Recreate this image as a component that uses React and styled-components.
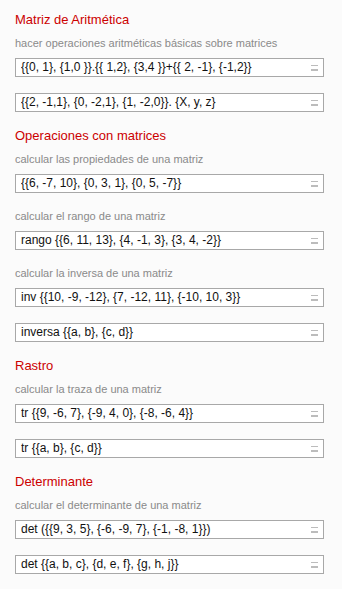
import React from "react";
import styled, { createGlobalStyle } from "styled-components";

const GlobalStyle = createGlobalStyle`
  html, body {
    margin: 0;
    padding: 0;
    background: #fbfbfb;
  }
  body {
    font-family: "Liberation Sans", Arial, sans-serif;
  }
`;

const Page = styled.div`
  width: 342px;
  padding: 12px 18px 20px 15px;
  box-sizing: border-box;
  display: flex;
  flex-direction: column;
  gap: 16px;
`;

const Section = styled.section`
  display: flex;
  flex-direction: column;
  gap: 16px;
`;

const Title = styled.h2`
  margin: 0 0 -8px;
  font-size: 13px;
  line-height: 16px;
  font-weight: normal;
  color: #cc0000;
`;

const Example = styled.div`
  display: flex;
  flex-direction: column;
  gap: 8px;
`;

const Caption = styled.div`
  font-size: 11px;
  line-height: 14px;
  color: #8a8a8a;
`;

const Field = styled.div`
  height: 19px;
  box-sizing: border-box;
  border: 1px solid #a8a8a8;
  background: #ffffff;
  display: flex;
  align-items: center;
  padding: 0 5px 0 5px;
`;

const Query = styled.span`
  flex: 1;
  font-size: 12px;
  line-height: 17px;
  color: #111;
  white-space: nowrap;
  overflow: hidden;
`;

const Equals = styled.span`
  width: 7px;
  height: 6px;
  display: flex;
  flex-direction: column;
  justify-content: space-between;

  &::before,
  &::after {
    content: "";
    height: 1.5px;
    background: #bcbcbc;
  }
`;

const sections = [
  {
    title: "Matriz de Aritmética",
    examples: [
      {
        caption: "hacer operaciones aritméticas básicas sobre matrices",
        query: "{{0, 1}, {1,0 }}.{{ 1,2}, {3,4 }}+{{ 2, -1}, {-1,2}}",
      },
      { query: "{{2, -1,1}, {0, -2,1}, {1, -2,0}}. {X, y, z}" },
    ],
  },
  {
    title: "Operaciones con matrices",
    examples: [
      {
        caption: "calcular las propiedades de una matriz",
        query: "{{6, -7, 10}, {0, 3, 1}, {0, 5, -7}}",
      },
      {
        caption: "calcular el rango de una matriz",
        query: "rango {{6, 11, 13}, {4, -1, 3}, {3, 4, -2}}",
      },
      {
        caption: "calcular la inversa de una matriz",
        query: "inv {{10, -9, -12}, {7, -12, 11}, {-10, 10, 3}}",
      },
      { query: "inversa {{a, b}, {c, d}}" },
    ],
  },
  {
    title: "Rastro",
    examples: [
      {
        caption: "calcular la traza de una matriz",
        query: "tr {{9, -6, 7}, {-9, 4, 0}, {-8, -6, 4}}",
      },
      { query: "tr {{a, b}, {c, d}}" },
    ],
  },
  {
    title: "Determinante",
    examples: [
      {
        caption: "calcular el determinante de una matriz",
        query: "det ({{9, 3, 5}, {-6, -9, 7}, {-1, -8, 1}})",
      },
      { query: "det {{a, b, c}, {d, e, f}, {g, h, j}}" },
    ],
  },
];

export default function App() {
  return (
    <>
      <GlobalStyle />
      <Page>
        {sections.map((s) => (
          <Section key={s.title}>
            <Title>{s.title}</Title>
            {s.examples.map((ex) => (
              <Example key={ex.query}>
                {ex.caption && <Caption>{ex.caption}</Caption>}
                <Field>
                  <Query>{ex.query}</Query>
                  <Equals />
                </Field>
              </Example>
            ))}
          </Section>
        ))}
      </Page>
    </>
  );
}
